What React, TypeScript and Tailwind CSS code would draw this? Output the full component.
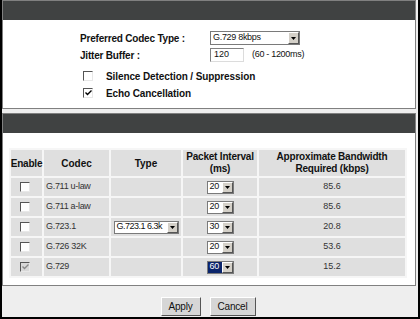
import React from "react";

const font = "font-['Liberation_Sans',Arial,sans-serif]";

function Arrow() {
  return (
    <span className="w-[11px] shrink-0 bg-[#d4d0c8] border border-t-white border-l-white border-b-[#555] border-r-[#555] flex items-center justify-center">
      <svg width="5" height="3" viewBox="0 0 5 3">
        <path d="M0 0h5L2.5 3z" fill="#000" />
      </svg>
    </span>
  );
}

function Select({ value, className, hl }: { value: string; className: string; hl?: boolean }) {
  return (
    <div className={`flex items-stretch bg-white border border-[#7a7a7a] ${className}`}>
      <span
        className={`flex-1 min-w-0 flex items-center pl-[2px] whitespace-nowrap ${
          hl ? "bg-[#0a246a] text-white pl-[1px]" : "overflow-hidden"
        }`}
      >
        {value}
      </span>
      <Arrow />
    </div>
  );
}

function Check({ checked, disabled }: { checked?: boolean; disabled?: boolean }) {
  return (
    <span
      className={`w-[10px] h-[10px] shrink-0 flex items-center justify-center border border-t-[#555] border-l-[#555] border-b-[#e8e8e8] border-r-[#e8e8e8] ${
        disabled ? "bg-[#d8d8d8]" : "bg-white"
      }`}
    >
      {checked && (
        <svg width="7" height="6" viewBox="0 0 7 6">
          <path d="M0.5 2.5l2 2 4-4" stroke={disabled ? "#8a8a8a" : "#000"} strokeWidth="1.4" fill="none" />
        </svg>
      )}
    </span>
  );
}

const rows = [
  { codec: "G.711 u-law", type: "", interval: "20", bw: "85.6" },
  { codec: "G.711 a-law", type: "", interval: "20", bw: "85.6" },
  { codec: "G.723.1", type: "G.723.1 6.3k", interval: "30", bw: "20.8" },
  { codec: "G.726 32K", type: "", interval: "20", bw: "53.6" },
  { codec: "G.729", type: "", interval: "60", bw: "15.2", fixed: true },
];

export default function App() {
  return (
    <div className={`${font} w-[420px] h-[319px] bg-[#eeeeee] border-l-2 border-r-2 border-b-2 border-black flex flex-col overflow-hidden text-[#111]`}>
      {/* voice settings */}
      <div className="h-[109px] mr-[2px] border border-[#808080] bg-white flex flex-col">
        <div className="h-[19px] bg-[#404242]" />
        <div className="flex flex-col pt-[11px]">
          <div className="flex items-center h-[14px] pl-[77px]">
            <span className="w-[130px] text-[10px] font-bold tracking-[-0.2px]">Preferred Codec Type :</span>
            <Select value="G.729 8kbps" className="w-[90px] h-[14px] text-[9px] tracking-[-0.3px]" />
          </div>
          <div className="flex items-center h-[14px] pl-[77px] mt-[3px]">
            <span className="w-[130px] text-[10px] font-bold tracking-[-0.2px]">Jitter Buffer :</span>
            <span className="w-[34px] h-[14px] flex items-center pl-[3px] text-[9px] bg-white border border-t-[#808080] border-l-[#808080] border-b-[#dcdcdc] border-r-[#dcdcdc]">
              120
            </span>
            <span className="ml-[8px] text-[9px] tracking-[-0.3px]">(60 - 1200ms)</span>
          </div>
          <div className="flex items-center h-[14px] pl-[80px] mt-[7px] gap-[13px]">
            <Check />
            <span className="text-[10px] font-bold tracking-[-0.1px]">Silence Detection / Suppression</span>
          </div>
          <div className="flex items-center h-[14px] pl-[80px] mt-[3px] gap-[13px]">
            <Check checked />
            <span className="text-[10px] font-bold tracking-[-0.1px]">Echo Cancellation</span>
          </div>
        </div>
      </div>

      {/* codec table */}
      <div className="h-[173px] mt-[4px] mr-[2px] border border-[#808080] bg-white flex flex-col">
        <div className="h-[19px] bg-[#404242]" />
        <div className="ml-[6px] mt-[15px] w-[398px] grid grid-cols-[31px_65px_70px_74px_146px] gap-[2px] p-[2px] bg-[#f6f6f6]">
          <div className="h-[26px] bg-[#dfdfdf] flex items-center justify-center text-[10px] font-bold tracking-[-0.2px]">Enable</div>
          <div className="bg-[#dfdfdf] flex items-center justify-center text-[10px] font-bold">Codec</div>
          <div className="bg-[#dfdfdf] flex items-center justify-center text-[10px] font-bold">Type</div>
          <div className="bg-[#dfdfdf] flex items-center justify-center text-center text-[10px] font-bold leading-[12px] tracking-[-0.2px]">
            Packet Interval
            <br />
            (ms)
          </div>
          <div className="bg-[#dfdfdf] flex items-center justify-center text-center text-[10px] font-bold leading-[12px] tracking-[-0.2px]">
            Approximate Bandwidth
            <br />
            Required (kbps)
          </div>
          {rows.map((r) => (
            <React.Fragment key={r.codec}>
              <div className="h-[18px] bg-[#dfdfdf] flex items-center justify-center pr-[3px]">
                <Check checked={r.fixed} disabled={r.fixed} />
              </div>
              <div className="bg-[#dfdfdf] flex items-center pl-[2px] text-[9px] tracking-[-0.3px] text-[#333]">{r.codec}</div>
              <div className="bg-[#dfdfdf] flex items-center justify-center">
                {r.type && <Select value={r.type} className="w-[65px] h-[13px] text-[9px] tracking-[-0.5px]" />}
              </div>
              <div className="bg-[#dfdfdf] flex items-center justify-center">
                <Select value={r.interval} hl={r.fixed} className="w-[27px] h-[13px] text-[9px] tracking-[-0.2px]" />
              </div>
              <div className="bg-[#dfdfdf] flex items-center justify-center text-[9px] text-[#333]">{r.bw}</div>
            </React.Fragment>
          ))}
        </div>
      </div>

      {/* actions */}
      <div className="flex justify-center gap-[9px] mt-[11px] pr-[4px]">
        <button className="w-[40px] h-[19px] bg-[#d6d6d6] border border-t-white border-l-white border-b-[#555] border-r-[#555] text-[10px] tracking-[-0.2px]">
          Apply
        </button>
        <button className="w-[46px] h-[19px] bg-[#d6d6d6] border border-t-white border-l-white border-b-[#555] border-r-[#555] text-[10px] tracking-[-0.2px]">
          Cancel
        </button>
      </div>
    </div>
  );
}
